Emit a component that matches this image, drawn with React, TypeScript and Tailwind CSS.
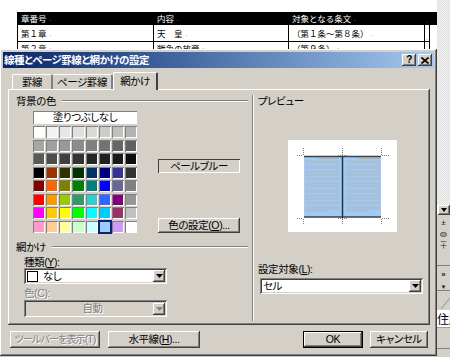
const raised =
  "shadow-[inset_-1px_-1px_0_#404040,inset_1px_1px_0_#ffffff,inset_-2px_-2px_0_#808080]";
const sunken =
  "shadow-[inset_1px_1px_0_#808080,inset_-1px_-1px_0_#ffffff,inset_2px_2px_0_#404040,inset_-2px_-2px_0_#d4d0c8]";
const ui = "font-['Liberation_Sans','Noto_Sans_CJK_JP',sans-serif] [font-feature-settings:'palt']";
const dim = "text-[#808080] [text-shadow:1px_1px_0_#ffffff]";

const palette = [
  ["#ffffff", "#f2f2f2", "#e6e6e6", "#dfdfdf", "#d9d9d9", "#cccccc", "#c0c0c0", "#b3b3b3"],
  ["#a6a6a6", "#a0a0a0", "#999999", "#8c8c8c", "#808080", "#737373", "#666666", "#606060"],
  ["#595959", "#4d4d4d", "#404040", "#333333", "#262626", "#202020", "#1a1a1a", "#0d0d0d"],
  ["#000000", "#993300", "#333300", "#003300", "#003366", "#000080", "#333399", "#333333"],
  ["#800000", "#ff6600", "#808000", "#008000", "#008080", "#0000ff", "#666699", "#808080"],
  ["#ff0000", "#ff9900", "#99cc00", "#339966", "#33cccc", "#3366ff", "#800080", "#969696"],
  ["#ff00ff", "#ffcc00", "#ffff00", "#00ff00", "#00ffff", "#00ccff", "#993366", "#c0c0c0"],
  ["#ff99cc", "#ffcc99", "#ffff99", "#ccffcc", "#ccffff", "#99ccff", "#cc99ff", "#ffffff"],
];

const rows = [
  ["章番号", "内容", "対象となる条文"],
  ["第１章", "天　皇", "（第１条～第８条）"],
  ["第２章", "戦争の放棄", "（第９条）"],
];
const colW = ["w-[136px]", "w-[135px]", "w-[136px]"];

function Arrow({ disabled = false }: { disabled?: boolean }) {
  return (
    <div className={`w-[12px] h-[12px] bg-[#d4d0c8] ${raised} flex items-center justify-center`}>
      <svg width="7" height="4">
        <polygon points="0,0 7,0 3.5,4" fill={disabled ? "#808080" : "#000000"} />
      </svg>
    </div>
  );
}

function GroupHeader({ label }: { label: string }) {
  return (
    <div className="flex items-center h-[12px] pl-[8px] pr-[4px]">
      <span className="leading-none">{label}</span>
      <div className="flex-1 ml-[6px] h-0 border-t border-b border-t-[#808080] border-b-white" />
    </div>
  );
}

function Preview() {
  const lines = Array.from({ length: 22 }, (_, i) => 20.5 + Math.round(i * 2.4));
  return (
    <svg width="109" height="92">
      <rect x="16" y="16" width="77" height="61" fill="#9fcbf8" />
      <line x1="29" y1="18.5" x2="51" y2="18.5" stroke="#c8aa8c" strokeWidth="0.9" />
      <line x1="70" y1="18.5" x2="92" y2="18.5" stroke="#c8aa8c" strokeWidth="0.9" />
      {lines.map((y, i) => (
        <g key={y}>
          <line x1="17" y1={y + 0.5} x2={i === lines.length - 1 ? 40 : 51} y2={y + 0.5} stroke="#b0b4b8" strokeWidth="0.9" />
          <line x1="58" y1={y + 0.5} x2={i === lines.length - 1 ? 80 : 92} y2={y + 0.5} stroke="#b0b4b8" strokeWidth="0.9" />
        </g>
      ))}
      <line x1="16" y1="16.5" x2="93" y2="16.5" stroke="#404040" strokeWidth="1.5" />
      <line x1="16" y1="77" x2="93" y2="77" stroke="#404040" strokeWidth="1.5" />
      <line x1="54.5" y1="16" x2="54.5" y2="78" stroke="#303030" strokeWidth="1.5" />
      <g stroke="#808080" strokeDasharray="1 1">
        <line x1="15.5" y1="8" x2="15.5" y2="15" />
        <line x1="9" y1="15.5" x2="15" y2="15.5" />
        <line x1="93.5" y1="8" x2="93.5" y2="15" />
        <line x1="94" y1="15.5" x2="101" y2="15.5" />
        <line x1="54.5" y1="8" x2="54.5" y2="15" />
        <line x1="50" y1="15.5" x2="59" y2="15.5" />
        <line x1="15.5" y1="79" x2="15.5" y2="85" />
        <line x1="9" y1="78.5" x2="15" y2="78.5" />
        <line x1="93.5" y1="79" x2="93.5" y2="85" />
        <line x1="94" y1="78.5" x2="101" y2="78.5" />
        <line x1="54.5" y1="79" x2="54.5" y2="85" />
        <line x1="50" y1="78.5" x2="59" y2="78.5" />
      </g>
    </svg>
  );
}

export default function App() {
  return (
    <div className="relative w-[450px] h-[357px] overflow-hidden flex bg-white">
      {/* document page */}
      <div className="relative w-[437px] h-full bg-white flex flex-col font-['Noto_Sans_CJK_JP',sans-serif]">
        <div className="absolute left-[22px] top-[3px] text-[6px] text-[#909090]">.</div>
        <div className="pt-[12px] pl-[17px]">
          {rows.map((r, idx) => (
            <div key={idx} className={`flex ${idx === 0 ? "h-[13px] bg-black text-white border-t border-black" : "h-[17px] text-black"}`}>
              {r.map((c, j) => (
                <div
                  key={j}
                  className={`${colW[j]} flex ${idx === 2 ? "items-start pt-[2px]" : "items-center"} pl-[3px] text-[8.5px] leading-none border-l border-b border-black`}
                >
                  {c}
                  <span className="ml-[3px] text-[5px] opacity-60">.</span>
                </div>
              ))}
              <div className="w-[6px] border-l border-r border-b border-black flex items-end justify-center text-[5px] text-[#808080]">.</div>
            </div>
          ))}
        </div>
        <div className="mt-auto h-[2px] bg-[#c8c8c8]" />

        {/* dialog window */}
        <div
          className={`absolute left-0 top-[49px] w-[437px] h-[307px] bg-[#d4d0c8] ${raised} ${ui} text-[10.5px] tracking-[-0.4px] text-black flex flex-col`}
        >
          <div className="mx-[3px] mt-[3px] h-[16px] bg-linear-to-r from-[#0a246a] to-[#a6caf0] flex items-center">
            <span className="pl-[1px] text-white font-bold leading-none tracking-[-0.5px]">線種とページ罫線と網かけの設定</span>
            <div className="ml-auto mr-[2px] flex gap-[2px]">
              <div className={`w-[14px] h-[12px] bg-[#d4d0c8] ${raised} flex items-center justify-center text-[10px] font-bold leading-none`}>?</div>
              <div className={`w-[14px] h-[12px] bg-[#d4d0c8] ${raised} flex items-center justify-center`}>
                <svg width="8" height="7">
                  <path d="M0.5 0.5 L7.5 6.5 M7.5 0.5 L0.5 6.5" stroke="#000" strokeWidth="1.6" />
                </svg>
              </div>
            </div>
          </div>

          {/* tabs */}
          <div className="relative z-10 flex items-end h-[21px] ml-[12px]">
            <div className="w-[41px] h-[15px] border-l border-t border-white border-r-2 border-r-[#808080] rounded-t-[2px] flex items-center justify-center leading-none">罫線</div>
            <div className="w-[60px] h-[15px] border-t border-white border-r-2 border-r-[#808080] rounded-t-[2px] flex items-center justify-center leading-none">ページ罫線</div>
            <div className="w-[45px] h-[18px] -mb-[1px] bg-[#d4d0c8] border-l border-t border-white border-r-2 border-r-[#404040] rounded-t-[2px] flex items-center justify-center leading-none pb-[1px]">網かけ</div>
          </div>

          {/* tab panel */}
          <div className={`ml-[8px] w-[422px] h-[236px] flex ${raised}`}>
            <div className="w-[244px] flex flex-col pt-[6px]">
              <GroupHeader label="背景の色" />
              <div className="flex mt-[4px]">
                <div className="ml-[25px] w-[104px] flex flex-col">
                  <div className="h-[13px] bg-white shadow-[inset_1px_1px_0_#808080,inset_-1px_-1px_0_#ffffff] flex items-center justify-center leading-none">
                    塗りつぶしなし
                  </div>
                  <div className="mt-[2px] grid grid-cols-8 gap-x-[1px] gap-y-[1.5px]">
                    {palette.flatMap((row, ri) =>
                      row.map((c, ci) => (
                        <div
                          key={`${ri}-${ci}`}
                          className={`h-[12px] ${
                            ri === 7 && ci === 5
                              ? "shadow-[0_0_0_1px_#0a246a,inset_0_0_0_1px_#0a246a]"
                              : "shadow-[inset_1px_1px_0_#808080,inset_-1px_-1px_0_#ffffff]"
                          }`}
                          style={{ backgroundColor: c }}
                        />
                      ))
                    )}
                  </div>
                </div>
                <div className="ml-[21px] w-[82px] flex flex-col">
                  <div className="mt-[48px] h-[14px] shadow-[inset_1px_1px_0_#404040,inset_-1px_-1px_0_#ffffff] flex items-center justify-center leading-none">
                    ペールブルー
                  </div>
                  <div className={`mt-[45px] h-[15px] ${raised} flex items-center justify-center leading-none`}>
                    色の設定(<u>O</u>)...
                  </div>
                </div>
              </div>

              <div className="mt-[8px]">
                <GroupHeader label="網かけ" />
              </div>
              <div className="mt-[3px] h-[12px] pl-[16px] flex items-center leading-none">
                種類(<u>Y</u>):
              </div>
              <div className={`ml-[16px] w-[143px] h-[16px] bg-white ${sunken} flex items-center p-[2px]`}>
                <div className="ml-[1px] w-[11px] h-[11px] border border-black bg-white" />
                <span className="ml-[5px] flex-1 leading-none">なし</span>
                <Arrow />
              </div>
              <div className={`mt-[3px] h-[12px] pl-[16px] flex items-center leading-none ${dim}`}>
                色(C):
              </div>
              <div className={`mt-[1px] ml-[16px] w-[143px] h-[17px] bg-[#d4d0c8] ${sunken} flex items-center p-[2px]`}>
                <span className={`flex-1 text-center pl-[6px] leading-none ${dim}`}>自動</span>
                <Arrow disabled />
              </div>
            </div>

            <div className="w-0 mt-[6px] mb-[4px] border-l border-r border-l-[#808080] border-r-white" />

            <div className="flex-1 flex flex-col pt-[6px]">
              <div className="h-[12px] pl-[4px] flex items-center leading-none">プレビュー</div>
              <div className="ml-[34px] mt-[33px] w-[109px] h-[92px] bg-white">
                <Preview />
              </div>
              <div className="mt-[31px] h-[12px] pl-[4px] flex items-center leading-none">
                設定対象(<u>L</u>):
              </div>
              <div className={`mt-[3px] ml-[6px] w-[163px] h-[16px] bg-white ${sunken} flex items-center p-[2px]`}>
                <span className="flex-1 pl-[1px] leading-none">セル</span>
                <Arrow />
              </div>
            </div>
          </div>

          {/* bottom buttons */}
          <div className="flex mt-[6px] h-[17px]">
            <div className={`ml-[10px] w-[90px] ${raised} flex items-center justify-center leading-none whitespace-nowrap text-[10px] tracking-[-0.8px] ${dim}`}>
              ツールバーを表示(T)
            </div>
            <div className={`ml-[8px] w-[92px] ${raised} flex items-center justify-center leading-none`}>
              水平線(<u>H</u>)...
            </div>
            <div className="ml-[103px] w-[60px] border border-black">
              <div className={`h-full ${raised} flex items-center justify-center leading-none`}>OK</div>
            </div>
            <div className={`ml-[7px] w-[58px] ${raised} flex items-center justify-center leading-none`}>
              キャンセル
            </div>
          </div>
        </div>
      </div>

      {/* right-hand scroll / toolbar strip */}
      <div className={`w-[13px] h-full flex flex-col ${ui} text-[8px] leading-none`}>
        <div className="h-[205px] bg-[repeating-conic-gradient(#dedede_0_25%,#f2f2f2_0_50%)] bg-[length:2px_2px]" />
        <div className={`h-[10px] ml-[1px] bg-[#d4d0c8] ${raised} flex items-center justify-center`}>
          <svg width="6" height="4">
            <polygon points="0,0 6,0 3,4" fill="#000" />
          </svg>
        </div>
        <div className="h-[75px] bg-[#d4d0c8] flex flex-col items-center pt-[4px] gap-[5px] text-[#202020]">
          <span>±</span>
          <span className="w-[7px] h-[7px] rounded-full bg-[#9a9a9a] border border-[#606060]" />
          <span>∓</span>
          <div className="mt-[10px] w-full h-0 border-t border-[#808080]" />
          <span className="font-bold">»</span>
          <span className="text-[6px]">▼</span>
        </div>
        <div className="h-[20px] bg-[#d4d0c8] border-t border-[#808080] flex items-end">
          <svg width="13" height="18">
            <line x1="4" y1="17" x2="13" y2="6" stroke="#909090" />
          </svg>
        </div>
        <div className="h-[17px] bg-white text-[12px] flex items-center overflow-hidden font-['Noto_Sans_CJK_JP',sans-serif]">
          <span className="whitespace-nowrap">住所</span>
        </div>
        <div className="flex-1 bg-[#d4d0c8] border-t border-[#a0a0a0] flex flex-col">
          <div className="mt-[20px] h-0 border-t border-[#808080]" />
        </div>
      </div>
    </div>
  );
}
